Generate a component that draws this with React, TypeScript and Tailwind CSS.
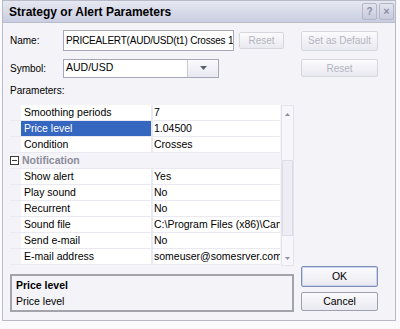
import React from 'react';

type Row = { n?: string; v?: string; sel?: boolean; cat?: string };

const rows: Row[] = [
  { n: 'Smoothing periods', v: '7' },
  { n: 'Price level', v: '1.04500', sel: true },
  { n: 'Condition', v: 'Crosses' },
  { cat: 'Notification' },
  { n: 'Show alert', v: 'Yes' },
  { n: 'Play sound', v: 'No' },
  { n: 'Recurrent', v: 'No' },
  { n: 'Sound file', v: 'C:\\Program Files (x86)\\Candle\\Sounds\\alert.wav' },
  { n: 'Send e-mail', v: 'No' },
  { n: 'E-mail address', v: 'someuser@somesrver.com' },
];

function Btn({ children, disabled, def, cls }: { children: React.ReactNode; disabled?: boolean; def?: boolean; cls?: string }) {
  return (
    <div
      className={
        'flex items-center justify-center rounded-[2px] border bg-gradient-to-b from-[#fbfbfd] to-[#e9e9f0] ' +
        (disabled ? 'border-[#d6d6de] text-[#b4b4c0] ' : def ? 'border-[#7f8fb8] text-black shadow-[inset_0_0_0_1px_#c9d3ee] ' : 'border-[#9e9eae] text-black ') +
        (cls || '')
      }
    >
      {children}
    </div>
  );
}

export default function App() {
  return (
    <div className="w-[400px] h-[329px] bg-[#fafafc] overflow-hidden" style={{ fontFamily: '"Liberation Sans", Arial, sans-serif' }}>
      <div className="ml-[2px] w-[394px] h-[321px] border border-[#b8bac8] bg-[#f4f3f8] flex flex-col">
        {/* Title bar */}
        <div className="h-[22px] flex items-center justify-between pl-[6px] pr-[1px] bg-gradient-to-b from-[#e6e8f1] to-[#c9cde0] border-b border-[#b9bccb]">
          <span className="text-[12px] font-bold text-black">Strategy or Alert Parameters</span>
          <div className="flex gap-[2px]">
            <div className="w-[15px] h-[17px] flex items-center justify-center border border-[#b3b6c6] rounded-[2px] bg-gradient-to-b from-[#e3e5ee] to-[#c7cadb] text-[10px] font-bold text-[#8a8fa6]">?</div>
            <div className="w-[15px] h-[17px] flex items-center justify-center border border-[#b3b6c6] rounded-[2px] bg-gradient-to-b from-[#e3e5ee] to-[#c7cadb] text-[11px] font-bold text-[#8a8fa6]">×</div>
          </div>
        </div>

        <div className="flex-1 pl-[7px] pt-[7px] text-[10px] text-black">
          {/* Name row */}
          <div className="flex items-center h-[21px]">
            <span className="w-[53px]">Name:</span>
            <div className="w-[171px] h-[21px] border border-[#a6a8b8] bg-white flex items-center pl-[2px] overflow-hidden whitespace-nowrap text-[10px] tracking-[-0.2px]">PRICEALERT(AUD/USD(t1) Crosses 1.04500)</div>
            <Btn disabled cls="ml-[5px] w-[45px] h-[17px] text-[10px]">Reset</Btn>
            <Btn disabled cls="ml-[17px] w-[77px] h-[20px] text-[10px]">Set as Default</Btn>
          </div>
          {/* Symbol row */}
          <div className="flex items-center h-[20px] mt-[7px]">
            <span className="w-[53px]">Symbol:</span>
            <div className="w-[156px] h-[19px] border border-[#a6a8b8] bg-white flex items-center">
              <span className="flex-1 pl-[2px] text-[10.5px]">AUD/USD</span>
              <div className="w-[31px] h-full border-l border-[#c9cad6] bg-gradient-to-b from-[#fbfbfd] to-[#e8e8f0] flex items-center justify-center">
                <svg width="7" height="4" viewBox="0 0 7 4"><path d="M0 0 L3.5 4 L7 0 Z" fill="#5b6070" /></svg>
              </div>
            </div>
            <Btn disabled cls="ml-[82px] w-[77px] h-[18px] text-[10px]">Reset</Btn>
          </div>
          <div className="mt-[6px] h-[13px] leading-[13px]">Parameters:</div>

          <div className="flex mt-[8px]">
            {/* left column */}
            <div className="w-[284px] flex flex-col">
              <div className="flex h-[161px]">
                <div className="w-[270px] flex flex-col">
                  {rows.map((r, i) =>
                    r.cat ? (
                      <div key={i} className="h-[16px] flex items-center border-b border-[#eae9f1]">
                        <div className="w-[12px] flex items-center">
                          <div className="w-[9px] h-[9px] border border-[#3c3c3c] flex items-center justify-center bg-white">
                            <div className="w-[5px] h-[1px] bg-[#3c3c3c]" />
                          </div>
                        </div>
                        <span className="font-bold text-[#8c8c98] text-[10.5px]">{r.cat}</span>
                      </div>
                    ) : (
                      <div key={i} className="h-[16px] flex border-b border-[#eae9f1]">
                        <div className="w-[11px]" />
                        <div className={'w-[130px] pl-[3px] flex items-center whitespace-nowrap overflow-hidden text-[10.5px] ' + (r.sel ? 'bg-[#3566c0] text-white' : 'bg-white')}>{r.n}</div>
                        <div className="w-[2px] bg-[#eae9f1]" />
                        <div className="flex-1 bg-white pl-[1px] flex items-center whitespace-nowrap overflow-hidden text-[10.5px]">{r.v}</div>
                      </div>
                    )
                  )}
                </div>
                {/* scrollbar */}
                <div className="w-[13px] ml-[1px] flex flex-col border border-[#e4e3ec] bg-[#f7f6fa]">
                  <div className="h-[16px] flex items-center justify-center">
                    <svg width="5" height="3" viewBox="0 0 5 3"><path d="M0 3 L2.5 0 L5 3 Z" fill="#8c90a6" /></svg>
                  </div>
                  <div className="h-[38px]" />
                  <div className="h-[76px] border border-[#dcdbe5] bg-[#eeedf3] rounded-[1px]" />
                  <div className="flex-1" />
                  <div className="h-[14px] flex items-center justify-center">
                    <svg width="5" height="3" viewBox="0 0 5 3"><path d="M0 0 L2.5 3 L5 0 Z" fill="#8c90a6" /></svg>
                  </div>
                </div>
              </div>
              {/* description */}
              <div className="mt-[8px] h-[38px] border-2 border-[#a3a3ab] flex flex-col justify-center pl-[4px] text-[10.5px] leading-[16px]">
                <div className="font-bold">Price level</div>
                <div>Price level</div>
              </div>
            </div>
            {/* right buttons */}
            <div className="ml-[7px] flex flex-col pt-[161px]">
              <Btn def cls="w-[77px] h-[21px] text-[10.5px]">OK</Btn>
              <Btn cls="mt-[5px] w-[77px] h-[19px] text-[10.5px]">Cancel</Btn>
            </div>
          </div>
        </div>
      </div>
    </div>
  );
}
